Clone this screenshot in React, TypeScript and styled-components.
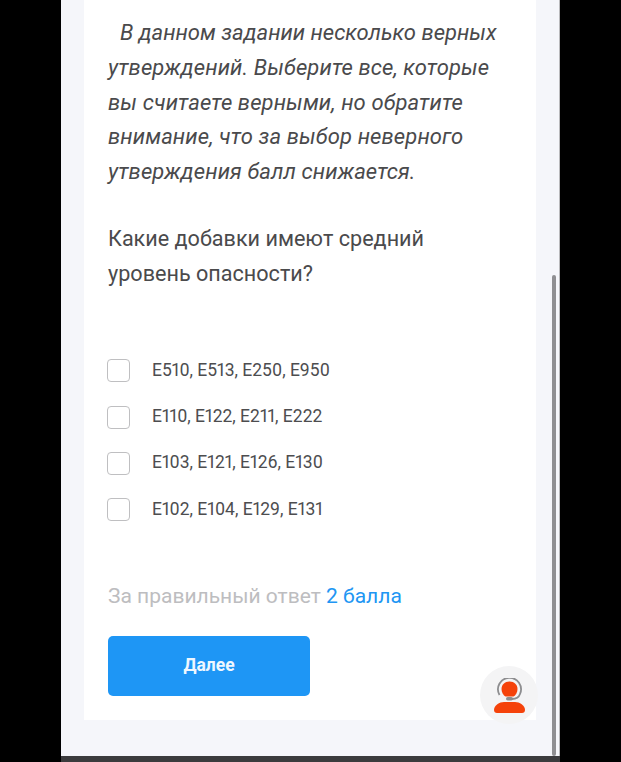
import React from "react";
import styled, { createGlobalStyle } from "styled-components";

const Global = createGlobalStyle`
  html, body { margin: 0; padding: 0; background: #000; }
  body { font-family: "Roboto", "Noto Sans", sans-serif; }
`;

const Screen = styled.div`
  width: 621px; height: 762px; background: #000; overflow: hidden;
  display: flex; align-items: stretch;
`;
const Phone = styled.div`
  position: relative; margin-left: 61px; width: 499px; height: 762px;
  background: #f5f6fa; display: flex; flex-direction: column;
  box-sizing: border-box; padding: 0 23px;
  border-right: 1px solid #b9b9bb;
`;
const Card = styled.main`
  background: #fff; height: 720px; box-sizing: border-box;
  padding: 16px 24px 0; flex: none; color: #4a4a4c;
`;
const Hint = styled.p`
  margin: 0; font-style: italic; font-size: 22px; line-height: 34.75px; white-space: nowrap;
  text-indent: 12px;
`;
const HintLine = styled.span`display: block; text-indent: 0; letter-spacing: 0.12px;`;
const Question = styled.h2`
  margin: 31px 0 0; font-weight: 400; font-size: 21.6px; line-height: 35px; white-space: nowrap;
`;
const Options = styled.ul`
  list-style: none; margin: 67px 0 0; padding: 0; display: flex; flex-direction: column; gap: 22.3px;
`;
const Option = styled.li`
  display: flex; align-items: center; height: 24px; gap: 22px;
  font-size: 17.500px; color: #4d4d4f; white-space: nowrap;
  font-variant-numeric: proportional-nums; font-feature-settings: "pnum" 1;
`;
const Box = styled.span`
  width: 21px; height: 21px; margin: 2px 0 0 -1px; border: 1.5px solid #bfbfc1; border-radius: 4px; flex: none; background: #fff;
`;
const Score = styled.p`
  margin: 61px 0 0; font-size: 21px; line-height: 28px; color: #bdbdc0; white-space: nowrap;
`;
const ScoreValue = styled.span`color: #2196f3;`;
const NextButton = styled.button`
  display: block; margin-top: 26px; padding: 0 0 2px; width: 202px; height: 60px; border: 0; border-radius: 5px;
  background: #1e96f5; color: #eef7ff; font-family: inherit; font-weight: 700; font-size: 17.500px;
`;
const BottomBar = styled.div`
  position: absolute; left: 0; right: -1px; bottom: 0; height: 6px; background: #3b3b3d;
`;
const Scrollbar = styled.div`
  position: absolute; left: 491px; top: 275px; width: 4px; height: 481px; background: #8f8f92; border-radius: 2px;
`;
const ChatBubble = styled.div`
  position: absolute; left: 419px; top: 666px; width: 58px; height: 58px; border-radius: 50%;
  background: #f4f4f5; display: flex; align-items: center; justify-content: center;
`;

const Agent = () => (
  <svg width="31" height="35" viewBox="0 0 31 35">
    <path d="M15.500 3.500c4.800 0 8 3.300 8 7.500 0 3.500-2 6.500-4 7.500h-8c-2-1-4-4-4-7.500 0-4.200 3.200-7.500 8-7.500z" fill="#f5420a" />
    <path d="M0 32C0 27.500 5.500 24 10 24h11c4.500 0 10 3.500 10 8 0 1.800-1.200 3-3 3H3c-1.800 0-3-1.200-3-3z" fill="#f5420a" />
    <path d="M5.500 17A11.500 11.500 0 1 1 26 16c-1 3-3.500 5-8 5" fill="none" stroke="#8d8d8f" strokeWidth="1.800" />
    <rect x="12" y="19" width="7" height="3.500" rx="1.750" fill="#8d8d8f" />
  </svg>
);

const options = ["E510, E513, E250, E950", "E110, E122, E211, E222", "E103, E121, E126, E130", "E102, E104, E129, E131"];

export default function App() {
  return (
    <Screen>
      <Global />
      <Phone>
        <Card>
          <Hint>
            В данном задании несколько верных
            <HintLine>утверждений. Выберите все, которые</HintLine>
            <HintLine>вы считаете верными, но обратите</HintLine>
            <HintLine>внимание, что за выбор неверного</HintLine>
            <HintLine>утверждения балл снижается.</HintLine>
          </Hint>
          <Question>
            Какие добавки имеют средний<br />уровень опасности?
          </Question>
          <Options>
            {options.map((o) => (
              <Option key={o}><Box />{o}</Option>
            ))}
          </Options>
          <Score>За правильный ответ <ScoreValue>2 балла</ScoreValue></Score>
          <NextButton>Далее</NextButton>
        </Card>
        <ChatBubble><Agent /></ChatBubble>
        <Scrollbar />
        <BottomBar />
      </Phone>
    </Screen>
  );
}
